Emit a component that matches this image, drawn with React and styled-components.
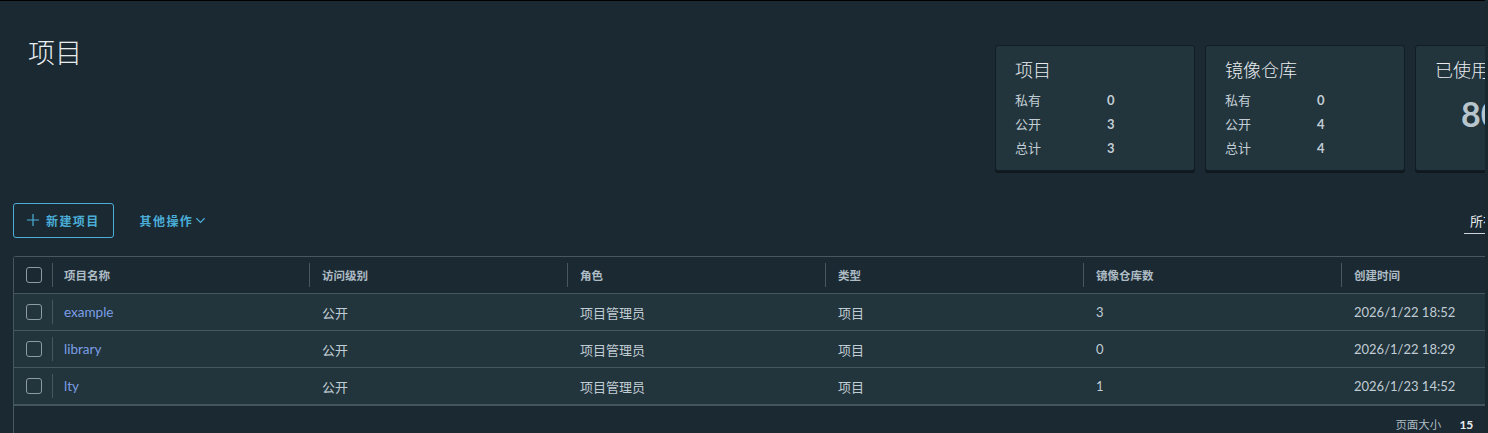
import styled, { createGlobalStyle } from 'styled-components';

const GlobalStyle = createGlobalStyle`
	html, body {
		margin: 0;
		padding: 0;
		background: #1a2830;
		overflow: hidden;
	}
	body {
		font-family: Lato, "Noto Sans CJK SC", sans-serif;
		color: #c1cdd4;
	}
`;

const Page = styled.div`
	width: 1485px;
	height: 433px;
	overflow: hidden;
	background: #1b2a32;
	border-top: 1px solid #000;
	box-sizing: border-box;
`;

const Content = styled.div`
	width: 1602px;
	padding-left: 13px;
`;

const Header = styled.div`
	display: flex;
	align-items: flex-start;
	justify-content: space-between;
`;

const Title = styled.h2`
	margin: 36px 0 0 15px;
	font-size: 27px;
	line-height: 32px;
	font-weight: 300;
	color: #e9ecef;
`;

const Cards = styled.div`
	display: flex;
	gap: 10px;
	margin-top: 44px;
`;

const Card = styled.div`
	width: 200px;
	height: 126px;
	box-sizing: border-box;
	padding: 12px 19px 10px;
	background: #22343c;
	border: 1px solid #121d23;
	border-radius: 3px;
	box-shadow: 0 2px 0 #0f181d;
`;

const CardTitle = styled.div`
	font-size: 18px;
	line-height: 24px;
	font-weight: 300;
	color: #e9ecef;
	margin-bottom: 6px;
	white-space: nowrap;
`;

const StatRow = styled.div`
	display: grid;
	grid-template-columns: 92px 1fr;
	font-size: 13px;
	line-height: 24px;
`;

const StatValue = styled.span`
	font-weight: 700;
`;

const BigValue = styled.div`
	margin-top: 12px;
	padding-left: 26px;
	font-size: 34px;
	line-height: 40px;
	font-weight: 700;
	color: #b9c5cc;
	white-space: nowrap;
`;

const Toolbar = styled.div`
	display: flex;
	align-items: center;
	margin-top: 31px;
	height: 36px;
`;

const OutlineButton = styled.button`
	display: flex;
	align-items: center;
	gap: 7px;
	height: 35px;
	padding: 0 13px;
	background: transparent;
	border: 1px solid #4aaed9;
	border-radius: 3px;
	color: #4aaed9;
	font-family: inherit;
	font-size: 12px;
	font-weight: 700;
	letter-spacing: 1.4px;
`;

const FlatButton = styled(OutlineButton)`
	border-color: transparent;
	margin-left: 12px;
	gap: 2px;
`;

const Search = styled.div`
	margin-left: auto;
	width: 151px;
	height: 25px;
	box-sizing: border-box;
	border-bottom: 1px solid #c9d3d9;
	padding-left: 6px;
	font-size: 13px;
	line-height: 24px;
	color: #e9ecef;
	margin-top: 2px;
`;

const Table = styled.div`
	margin-top: 18px;
	border: 1px solid #47575f;
	border-bottom: none;
	border-radius: 3px 3px 0 0;
`;

const Row = styled.div`
	display: grid;
	grid-template-columns: 38px 257px repeat(4, 258px) 1fr;
	box-sizing: border-box;
	background: ${(p) => (p.$head ? '#1b2a32' : '#22343c')};
	border-bottom: ${(p) => (p.$last ? '2px solid #45555e' : '1px solid #47575f')};
	height: ${(p) => (p.$last ? '38px' : '37px')};
`;

const Cell = styled.div`
	position: relative;
	display: flex;
	align-items: center;
	padding-left: ${(p) => (p.$check ? '12px' : '13px')};
	font-size: ${(p) => (p.$head ? '11.5px' : '13px')};
	font-weight: ${(p) => (p.$head ? 700 : 400)};
	color: ${(p) => (p.$head ? '#adbbc4' : '#c1cdd4')};
	white-space: nowrap;

	&::before {
		content: '';
		display: ${(p) => (p.$sep ? 'block' : 'none')};
		position: absolute;
		left: 0;
		top: 6px;
		bottom: 6px;
		width: 1px;
		background: #47575f;
	}
`;

const NameCell = styled(Cell)`
	padding-left: 12px;
`;

const Checkbox = styled.span`
	width: 16px;
	height: 16px;
	box-sizing: border-box;
	border: 1px solid #8d9ba3;
	border-radius: 3px;
`;

const NameLink = styled.span`
	color: #7b9fe6;
	font-size: 13.5px;
`;

const Footer = styled.div`
	display: flex;
	align-items: center;
	justify-content: flex-end;
	height: 36px;
	padding-right: 12px;
	font-size: 11.5px;
	color: #adbbc4;
	white-space: nowrap;
`;

const PageSize = styled.span`
	margin-left: 18px;
	font-size: 12px;
	font-weight: 700;
	color: #e9ecef;
`;

const Summary = styled.span`
	margin-left: 12px;
	padding-left: 16px;
	font-size: 12px;
`;

const PlusIcon = () => (
	<svg width="12" height="12" viewBox="0 0 12 12">
		<path d="M6 0v12M0 6h12" stroke="currentColor" strokeWidth="1.2" fill="none" />
	</svg>
);

const ChevronIcon = () => (
	<svg width="11" height="11" viewBox="0 0 12 12">
		<path d="M1.5 3.5 6 8l4.5-4.5" stroke="currentColor" strokeWidth="1.3" fill="none" />
	</svg>
);

const headers = ['项目名称', '访问级别', '角色', '类型', '镜像仓库数', '创建时间'];

const projects = [
	{ name: 'example', access: '公开', role: '项目管理员', type: '项目', repos: 3, created: '2026/1/22 18:52' },
	{ name: 'library', access: '公开', role: '项目管理员', type: '项目', repos: 0, created: '2026/1/22 18:29' },
	{ name: 'lty', access: '公开', role: '项目管理员', type: '项目', repos: 1, created: '2026/1/23 14:52' },
];

const StatCard = ({ title, stats }) => (
	<Card>
		<CardTitle>{title}</CardTitle>
		{stats.map(([label, value]) => (
			<StatRow key={label}>
				<span>{label}</span>
				<StatValue>{value}</StatValue>
			</StatRow>
		))}
	</Card>
);

export default function App() {
	return (
		<>
			<GlobalStyle />
			<Page>
				<Content>
					<Header>
						<Title>项目</Title>
						<Cards>
							<StatCard title="项目" stats={[['私有', 0], ['公开', 3], ['总计', 3]]} />
							<StatCard title="镜像仓库" stats={[['私有', 0], ['公开', 4], ['总计', 4]]} />
							<Card>
								<CardTitle>已使用存储</CardTitle>
								<BigValue>80.49MiB</BigValue>
							</Card>
						</Cards>
					</Header>

					<Toolbar>
						<OutlineButton>
							<PlusIcon />
							新建项目
						</OutlineButton>
						<FlatButton>
							其他操作
							<ChevronIcon />
						</FlatButton>
						<Search>所有项目</Search>
					</Toolbar>

					<Table>
						<Row $head>
							<Cell $check $head>
								<Checkbox />
							</Cell>
							{headers.map((h, i) =>
								i === 0 ? (
									<NameCell key={h} $head $sep>
										{h}
									</NameCell>
								) : (
									<Cell key={h} $head $sep>
										{h}
									</Cell>
								),
							)}
						</Row>
						{projects.map((p, i) => (
							<Row key={p.name} $last={i === projects.length - 1}>
								<Cell $check>
									<Checkbox />
								</Cell>
								<NameCell $sep>
									<NameLink>{p.name}</NameLink>
								</NameCell>
								<Cell>{p.access}</Cell>
								<Cell>{p.role}</Cell>
								<Cell>{p.type}</Cell>
								<Cell>{p.repos}</Cell>
								<Cell>{p.created}</Cell>
							</Row>
						))}
						<Footer>
							页面大小
							<PageSize>15</PageSize>
							<Summary>1 - 3 共计 3 条记录</Summary>
						</Footer>
					</Table>
				</Content>
			</Page>
		</>
	);
}
